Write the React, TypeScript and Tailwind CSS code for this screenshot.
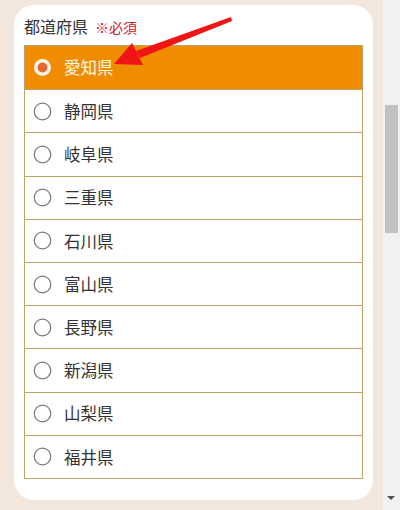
import React from 'react'

const prefectures = ['愛知県', '静岡県', '岐阜県', '三重県', '石川県', '富山県', '長野県', '新潟県', '山梨県', '福井県']

function Radio({ checked }: { checked: boolean }) {
  return (
    <svg width="19" height="19" viewBox="0 0 19 19" className="shrink-0">
      {checked ? (
        <>
          <circle cx="9.5" cy="9.5" r="8.5" fill="#fdf3e6" />
          <circle cx="9.5" cy="9.5" r="5" fill="#e2693a" />
        </>
      ) : (
        <circle cx="9.5" cy="9.5" r="8.3" fill="#fff" stroke="#7a7a7a" strokeWidth="1.2" />
      )}
    </svg>
  )
}

function App() {
  return (
    <div
      className="flex h-[510px] w-[400px] overflow-hidden bg-[#f3e6dd]"
      style={{ fontFamily: '"Noto Sans CJK JP", "Noto Sans", sans-serif' }}
    >
      <div className="relative w-[383px] shrink-0 pl-[14px] pt-[5px]">
        {/* Card */}
        <div className="h-[495px] w-[359px] rounded-[20px] bg-white pl-[10px] pr-[10px] pt-[13px]">
          <div className="flex h-[27px] items-baseline gap-[7px] leading-none">
            <span className="text-[16px] text-[#333]">都道府県</span>
            <span className="text-[14px] text-[#c8202a]">※必須</span>
          </div>

          <div className="border border-[#bba464]">
            {prefectures.map((name, i) => (
              <div
                key={name}
                className={`flex h-[43.2px] items-center gap-[12px] pl-[8px] ${
                  i > 0 ? 'border-t border-[#bba464]' : ''
                } ${i === 0 ? 'bg-[#f08c00] text-[#fff8e8]' : 'bg-white text-[#333]'}`}
              >
                <Radio checked={i === 0} />
                <span className="text-[16.5px] leading-none">{name}</span>
              </div>
            ))}
          </div>
        </div>

        {/* Red arrow */}
        <svg className="pointer-events-none absolute left-0 top-0" width="383" height="120" viewBox="0 0 383 120">
          <polygon points="231,17 232,21 140,58 136,51" fill="#f01414" />
          <polygon points="114,64 132,43 143,65" fill="#f01414" />
        </svg>
      </div>

      {/* Scrollbar */}
      <div className="relative flex-1 bg-[#f1f1f1]">
        <div className="absolute left-[2px] top-[105px] h-[128px] w-[13px] bg-[#c1c1c1]" />
        <div className="absolute bottom-[10px] left-[4px] h-0 w-0 border-x-[4px] border-t-[4px] border-x-transparent border-t-[#505050]" />
      </div>
    </div>
  )
}

export default App
